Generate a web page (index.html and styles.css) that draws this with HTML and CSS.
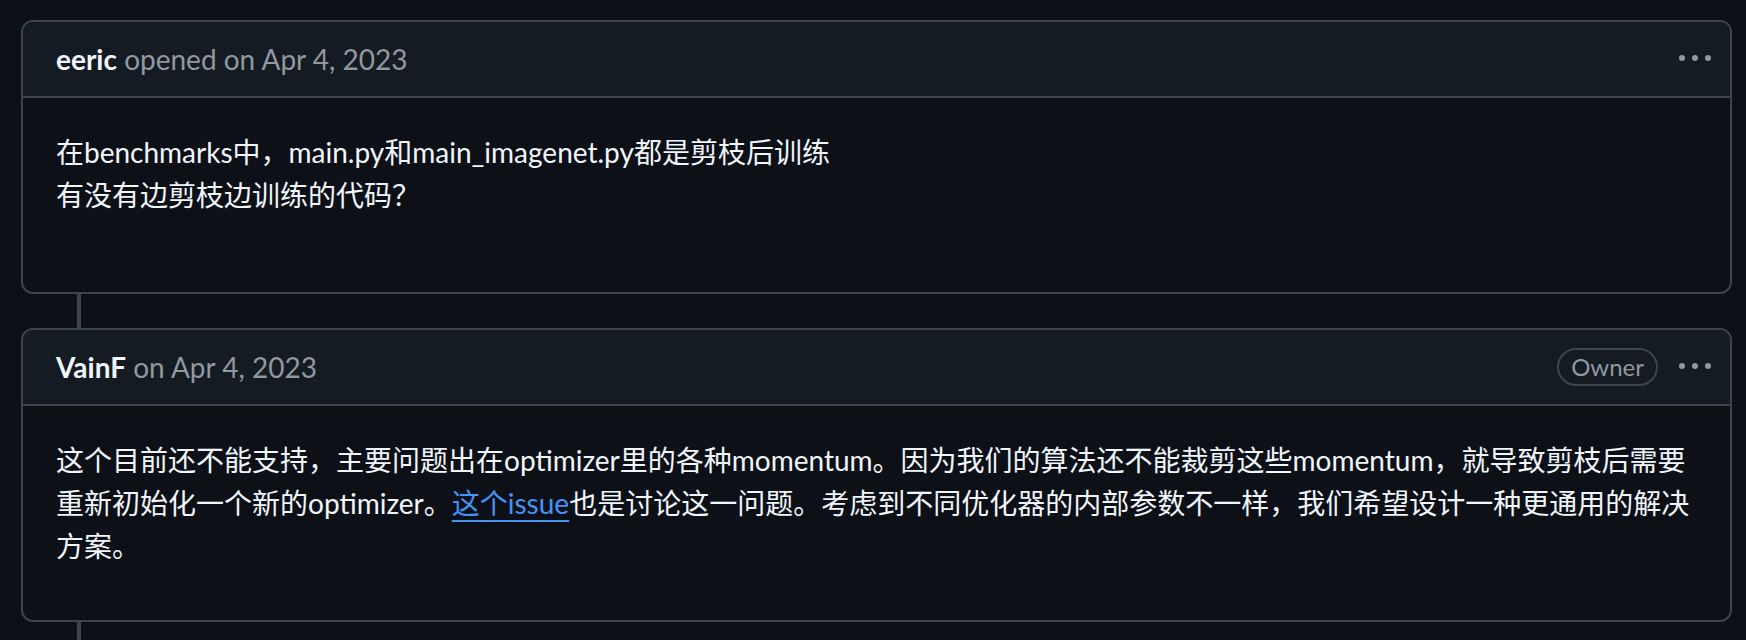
FILE: index.html
```html
<!DOCTYPE html>
<html lang="zh-CN">
<head>
    <meta charset="UTF-8">
    <meta name="viewport" content="width=device-width, initial-scale=1.0">
    <title>Issue</title>
    <link rel="stylesheet" href="styles.css">
</head>
<body>
    <div class="timeline">
        <div class="comment">
            <div class="comment-header">
                <div class="comment-meta">
                    <a class="author" href="#">eeric</a> opened on Apr 4, 2023
                </div>
                <button class="kebab" aria-label="Show options">
                    <svg viewBox="0 0 16 16" width="32" height="32"><path d="M8 9a1.5 1.5 0 100-3 1.5 1.5 0 000 3zM1.5 9a1.5 1.5 0 100-3 1.5 1.5 0 000 3zm13 0a1.5 1.5 0 100-3 1.5 1.5 0 000 3z"></path></svg>
                </button>
            </div>
            <div class="comment-body first">
                在benchmarks中，main.py和main_imagenet.py都是剪枝后训练<br>
                有没有边剪枝边训练的代码？
            </div>
        </div>

        <div class="connector"></div>

        <div class="comment">
            <div class="comment-header">
                <div class="comment-meta">
                    <a class="author" href="#">VainF</a> on Apr 4, 2023
                </div>
                <span class="badge">Owner</span>
                <button class="kebab" aria-label="Show options">
                    <svg viewBox="0 0 16 16" width="32" height="32"><path d="M8 9a1.5 1.5 0 100-3 1.5 1.5 0 000 3zM1.5 9a1.5 1.5 0 100-3 1.5 1.5 0 000 3zm13 0a1.5 1.5 0 100-3 1.5 1.5 0 000 3z"></path></svg>
                </button>
            </div>
            <div class="comment-body">
                这个目前还不能支持，主要问题出在optimizer里的各种momentum。因为我们的算法还不能裁剪这些momentum，就导致剪枝后需要<br>
                重新初始化一个新的optimizer。<a class="link" href="#">这个issue</a>也是讨论这一问题。考虑到不同优化器的内部参数不一样，我们希望设计一种更通用的解决方案。
            </div>
        </div>

        <div class="connector tail"></div>
    </div>
</body>
</html>
```

FILE: styles.css
```css
body {
    margin: 0;
    padding: 20px 14px 0 21px;
    height: 640px;
    box-sizing: border-box;
    overflow: hidden;
    background: #0d1117;
    color: #f0f6fc;
    font-family: 'Lato', 'Noto Sans CJK SC', sans-serif;
    font-size: 28px;
}

.comment {
    border: 2px solid #3d444d;
    border-radius: 12px;
    overflow: hidden;
}

.comment-header {
    display: flex;
    align-items: center;
    height: 74px;
    padding: 0 19px 0 33px;
    background: #151b23;
    border-bottom: 2px solid #3d444d;
}

.comment-meta {
    flex: 1;
    line-height: 42px;
    color: #9198a1;
}

.author {
    color: #f0f6fc;
    font-weight: 700;
    text-decoration: none;
}

.badge {
    margin-right: 21px;
    padding: 0 12px;
    border: 2px solid #3d444d;
    border-radius: 20px;
    font-size: 24px;
    line-height: 34px;
    color: #9198a1;
}

.kebab {
    display: flex;
    padding: 0;
    border: none;
    background: none;
    fill: #9198a1;
}

.comment-body {
    padding: 33px 32px 52px 33px;
    line-height: 43px;
}

.comment-body.first {
    padding-bottom: 75px;
}

.link {
    color: #4493f8;
    text-decoration: underline;
    text-underline-offset: 6px;
    text-decoration-thickness: 2px;
}

.connector {
    height: 34px;
    margin-left: 56px;
    border-left: 4px solid #3d444d;
}

.connector.tail {
    height: 40px;
}
```
